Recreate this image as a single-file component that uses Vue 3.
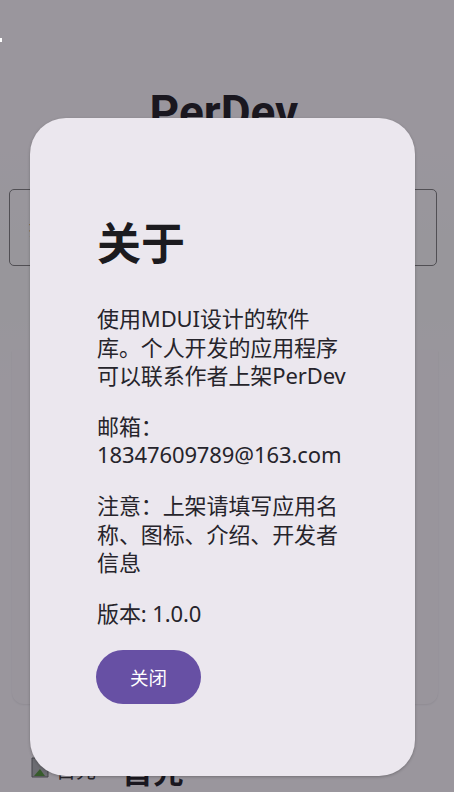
<script setup>
const paragraphs = [
  '使用MDUI设计的软件库。个人开发的应用程序可以联系作者上架PerDev',
  '邮箱：18347609789@163.com',
  '注意：上架请填写应用名称、图标、介绍、开发者信息',
  '版本: 1.0.0'
]
</script>

<template>
  <div class="screen">
    <span class="speck"></span>
    <h1 class="brand">PerDev</h1>
    <div class="search"><span>搜索</span></div>
    <div class="panel"></div>
    <div class="app-row">
      <span class="thumb">
        <svg width="18" height="21" viewBox="0 0 18 21">
          <path d="M1 1h11l5 5v14H1z" fill="#a9acae" stroke="#66686a" />
          <path d="M3 19l6-7 5 7z" fill="#4e8f36" />
        </svg>
        <span class="alt">首先</span>
      </span>
      <span class="app-name">首先</span>
    </div>
    <div class="scrim"></div>
    <section class="dialog">
      <h2>关于</h2>
      <p v-for="text in paragraphs" :key="text">{{ text }}</p>
      <button type="button">关闭</button>
    </section>
  </div>
</template>

<style>
html, body { margin: 0; }
</style>

<style scoped>
.screen {
  position: relative;
  width: 454px;
  height: 792px;
  overflow: hidden;
  background: linear-gradient(#f8f5f9 0, #f8f5f9 150px, #f4f5f4 260px, #f4f5f4 300px, #f8f5f9 380px);
  font-family: "Noto Sans", "Noto Sans CJK SC", sans-serif;
  color: #1c1b1f;
}
.speck {
  position: absolute;
  left: 0;
  top: 38px;
  width: 2px;
  height: 4px;
  background: #fff;
  z-index: 3;
}
.brand {
  margin: 0;
  padding: 82px 6px 0 0;
  height: 189px;
  box-sizing: border-box;
  text-align: center;
  font-family: Roboto, sans-serif;
  font-size: 46px;
  line-height: 60px;
  font-weight: 700;
}
.search {
  box-sizing: border-box;
  width: 428px;
  height: 77px;
  margin-left: 9px;
  padding-left: 19px;
  border: 1.5px solid #7a7a7a;
  border-radius: 5px;
  display: flex;
  align-items: center;
  font-size: 18px;
}
.panel {
  width: 426px;
  height: 354px;
  margin: 84px 0 0 12px;
  border-radius: 0 0 12px 12px;
  background: #f6f3f7;
  box-shadow: 0 1px 2px rgba(0, 0, 0, 0.08);
}
.app-row {
  display: flex;
  align-items: center;
  gap: 26px;
  margin: 47px 0 0 31px;
}
.thumb {
  display: flex;
  align-items: flex-end;
  width: 65px;
  height: 26px;
  font-size: 20px;
  line-height: 26px;
  color: #333;
}
.thumb svg {
  flex: none;
  margin-bottom: 6px;
}
.alt { margin-left: 7px; }
.app-name {
  font-size: 31px;
  line-height: 40px;
  font-weight: 700;
}
.scrim {
  position: absolute;
  inset: 0;
  background: rgba(25, 20, 30, 0.42);
}
.dialog {
  position: absolute;
  left: 30px;
  top: 118px;
  box-sizing: border-box;
  width: 385px;
  height: 658px;
  padding: 96px 67px 0;
  border-radius: 36px;
  background: #ebe7ee;
  box-shadow: 0 1px 3px rgba(0, 0, 0, 0.25);
}
h2 {
  margin: 0 0 32px;
  font-size: 44px;
  line-height: 58px;
  font-weight: 700;
}
p {
  margin: 0 0 22px;
  font-size: 22px;
  line-height: 28.6px;
  letter-spacing: -0.1px;
  color: #26242b;
  word-break: break-word;
}
button {
  display: block;
  width: 105px;
  height: 54px;
  margin: 23px 0 0 -1px;
  border: 0;
  border-radius: 27px;
  background: #6750a4;
  color: #fff;
  font: inherit;
  font-size: 18.5px;
}
</style>
